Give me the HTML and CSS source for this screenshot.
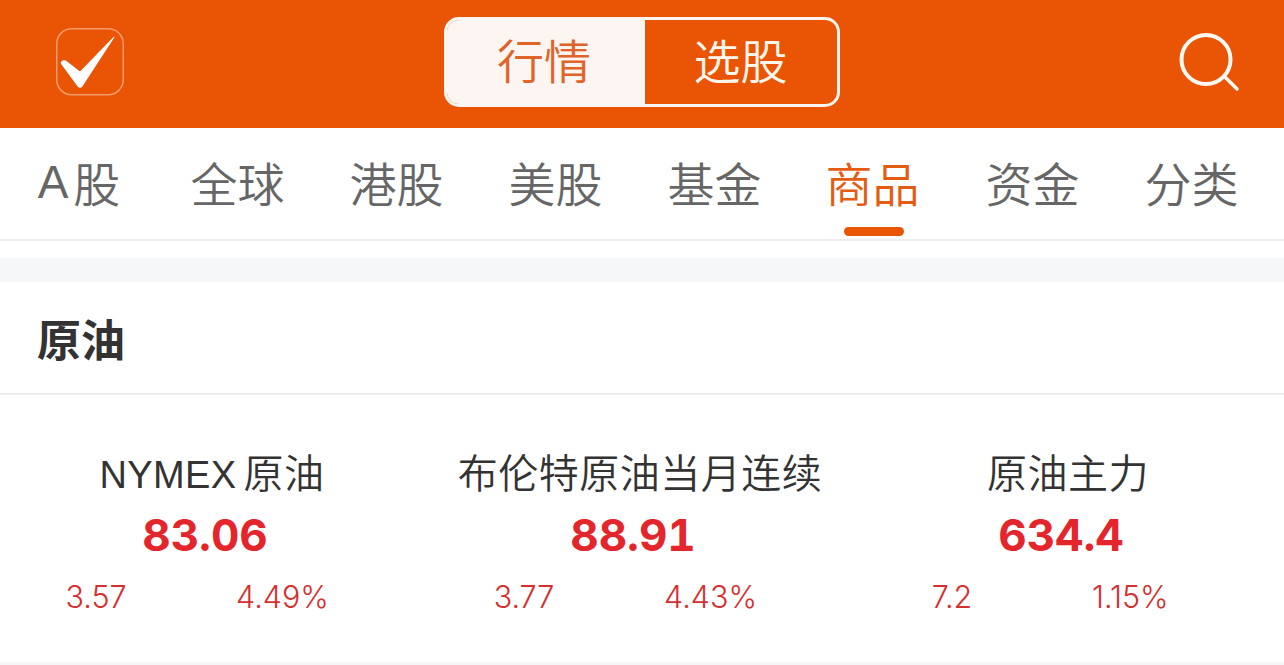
FILE: index.html
```html
<!DOCTYPE html>
<html lang="zh">
<head>
<meta charset="utf-8">
<title>行情</title>
<link rel="stylesheet" href="styles.css">
</head>
<body>
<header class="topbar">
  <svg class="icon-check" width="68" height="68" viewBox="0 0 68 68">
    <rect x="0.75" y="0.75" width="66.5" height="66" rx="15" fill="none" stroke="#fff" stroke-opacity=".42" stroke-width="1.5"/>
    <path d="M5.5 36.500C4 35 5 33 7 32.500c1.500-.4 2.500-.2 3.800.8L24 43.500 57.500 9c.6-.6 1.200 0 .8.6L27 57.500c-1.500 2.700-3.500 3-5.200 1.200Z" fill="#fff"/>
  </svg>
  <div class="toggle">
    <div class="toggle-item toggle-on">行情</div>
    <div class="toggle-item toggle-off">选股</div>
  </div>
  <svg class="icon-search" width="62" height="62" viewBox="0 0 62 62">
    <circle cx="28" cy="28.500" r="24.500" fill="none" stroke="#fff8f2" stroke-width="4"/>
    <path d="M47.500 46.500 59 58" fill="none" stroke="#fff8f2" stroke-width="3.500" stroke-linecap="round"/>
  </svg>
</header>
<nav class="tabs">
  <a class="tab"><span class="latin">A</span>股</a>
  <a class="tab">全球</a>
  <a class="tab">港股</a>
  <a class="tab">美股</a>
  <a class="tab">基金</a>
  <a class="tab tab-on">商品</a>
  <a class="tab">资金</a>
  <a class="tab">分类</a>
</nav>
<div class="band"></div>
<h2 class="section-title">原油</h2>
<section class="cards">
  <article class="card">
    <div class="name"><span class="latin">NYMEX</span>原油</div>
    <div class="price">83.06</div>
    <div class="delta"><span class="delta-abs">3.57</span><span class="delta-pct">4.49%</span></div>
  </article>
  <article class="card">
    <div class="name">布伦特原油当月连续</div>
    <div class="price">88.91</div>
    <div class="delta"><span class="delta-abs">3.77</span><span class="delta-pct">4.43%</span></div>
  </article>
  <article class="card">
    <div class="name">原油主力</div>
    <div class="price">634.4</div>
    <div class="delta"><span class="delta-abs">7.2</span><span class="delta-pct">1.15%</span></div>
  </article>
</section>
</body>
</html>
```
FILE: styles.css
```css
* { box-sizing: border-box; }
html, body { margin: 0; height: 100%; overflow: hidden; background: #fff; }
body { font-family: "Noto Sans CJK SC", "Liberation Sans", sans-serif; color: #333; }
.latin { font-family: "Liberation Sans", sans-serif; }

.topbar {
  height: 128px;
  background: #e95504;
  display: flex;
  align-items: flex-start;
  padding: 17px 44px 0 56px;
}
.icon-check { margin-top: 11px; flex: none; }
.icon-search { margin: 14px 0 0 auto; flex: none; }
.toggle {
  margin-left: 320px;
  width: 396px;
  height: 90px;
  display: flex;
  border: 3px solid #fdf5f1;
  border-radius: 15px;
  overflow: hidden;
}
.toggle-item {
  flex: 1 1 0;
  display: flex;
  align-items: center;
  justify-content: center;
  padding-bottom: 8px;
  font-size: 47px;
  line-height: 1;
  font-weight: 350;
  color: #fff6ee;
}
.toggle-on { flex: 0 0 198px; padding-right: 4px; background: #fdf5f1; color: #e0632a; }
.toggle-off { padding-right: 1px; }

.tabs {
  height: 113px;
  display: grid;
  grid-template-columns: 158px repeat(7, 159px);
  border-bottom: 2px solid #eeeeee;
}
.tab {
  position: relative;
  display: flex;
  justify-content: center;
  padding-top: 24px;
  font-size: 47px;
  line-height: 60px;
  font-weight: 350;
  color: #666;
}
.tab .latin { margin-right: 5px; font-size: 46px; }
.tab-on { color: #e45c12; padding-right: 2px; }
.tab-on::after {
  content: "";
  position: absolute;
  left: 50%;
  bottom: 3px;
  width: 60px;
  height: 9px;
  margin-left: -30px;
  border-radius: 5px;
  background: #e95504;
}

.band { height: 24px; margin-top: 17px; background: #f5f7f9; }

.section-title {
  margin: 0;
  height: 113px;
  padding: 27px 0 0 37px;
  font-size: 44px;
  line-height: 58px;
  font-weight: 700;
  color: #333;
  border-bottom: 2px solid #eeeeee;
}

.cards {
  display: grid;
  grid-template-columns: repeat(3, 428px);
  height: 270px;
  border-bottom: 3px solid #f5f6f7;
}
.card { padding-top: 51px; }
.name {
  height: 50px;
  padding-right: 4px;
  text-align: center;
  font-size: 40px;
  line-height: 50px;
  font-weight: 350;
  letter-spacing: .5px;
  color: #333;
}
.name .latin { margin-right: 7px; font-size: 38px; letter-spacing: .4px; }
.price {
  padding-right: 18px;
  margin-top: 11px;
  text-align: center;
  font-family: Inter, "Liberation Sans", sans-serif;
  font-size: 44px;
  line-height: 56px;
  font-weight: 700;
  font-variant-numeric: tabular-nums;
  color: #e4262c;
}
.delta {
  display: flex;
  margin-top: 14px;
  font-family: Inter, "Liberation Sans", sans-serif;
  font-size: 30.500px;
  line-height: 40px;
  font-weight: 300;
  color: #d5302f;
}
.delta-abs { flex: 0 0 192px; text-align: center; }
.delta-pct { margin-left: 44px; }
```
